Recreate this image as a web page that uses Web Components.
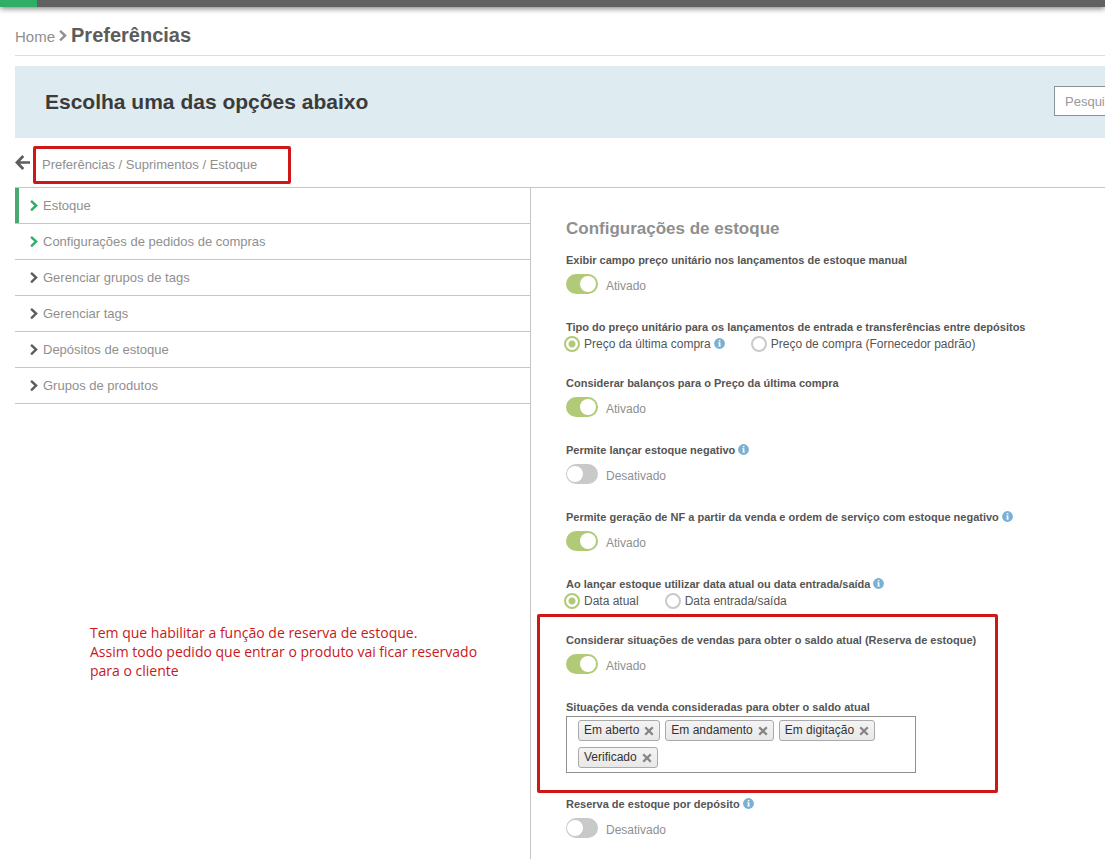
<!DOCTYPE html>
<html lang="pt-BR">
<head>
<meta charset="utf-8">
<title>Preferências</title>
<style>
  body { margin: 0; background: #fff; font-family: "Liberation Sans", Arial, sans-serif; color: #8f8f8f; overflow: hidden; }
</style>
</head>
<body>
<pref-page>
  <top-bar slot="top"></top-bar>
  <page-title parent="Home">Preferências</page-title>
  <search-banner placeholder="Pesquisar">Escolha uma das opções abaixo</search-banner>
  <crumb-bar>Preferências / Suprimentos / Estoque</crumb-bar>
  <split-view>
    <nav slot="side" aria-label="Suprimentos">
      <menu-item tone="green" current>Estoque</menu-item>
      <menu-item tone="green">Configurações de pedidos de compras</menu-item>
      <menu-item>Gerenciar grupos de tags</menu-item>
      <menu-item>Gerenciar tags</menu-item>
      <menu-item>Depósitos de estoque</menu-item>
      <menu-item>Grupos de produtos</menu-item>
    </nav>
    <side-note slot="side">Tem que habilitar a função de reserva de estoque.<br>Assim todo pedido que entrar o produto vai ficar reservado<br>para o cliente</side-note>
    <section-title>Configurações de estoque</section-title>
    <switch-field on>Exibir campo preço unitário nos lançamentos de estoque manual</switch-field>
    <radio-field>Tipo do preço unitário para os lançamentos de entrada e transferências entre depósitos
      <radio-option slot="options" checked info>Preço da última compra</radio-option>
      <radio-option slot="options">Preço de compra (Fornecedor padrão)</radio-option>
    </radio-field>
    <switch-field on>Considerar balanços para o Preço da última compra</switch-field>
    <switch-field info>Permite lançar estoque negativo</switch-field>
    <switch-field on info>Permite geração de NF a partir da venda e ordem de serviço com estoque negativo</switch-field>
    <radio-field info>Ao lançar estoque utilizar data atual ou data entrada/saída
      <radio-option slot="options" checked>Data atual</radio-option>
      <radio-option slot="options">Data entrada/saída</radio-option>
    </radio-field>
    <highlight-box>
      <switch-field on>Considerar situações de vendas para obter o saldo atual (Reserva de estoque)</switch-field>
      <tag-field>Situações da venda consideradas para obter o saldo atual
        <tag-chip slot="tags">Em aberto</tag-chip>
        <tag-chip slot="tags">Em andamento</tag-chip>
        <tag-chip slot="tags">Em digitação</tag-chip>
        <tag-chip slot="tags">Verificado</tag-chip>
      </tag-field>
    </highlight-box>
    <switch-field info>Reserva de estoque por depósito</switch-field>
  </split-view>
</pref-page>
<script>
const chevron = `<svg class="chev" viewBox="0 0 8 12" width="8" height="12" aria-hidden="true"><path d="M1.1.9 6.1 5.6 1.1 10.4" fill="none" stroke="currentColor" stroke-width="2.4"/></svg>`;

function define(name, html, setup) {
  const template = document.createElement('template');
  template.innerHTML = html;
  customElements.define(name, class extends HTMLElement {
    constructor() {
      super();
      this.attachShadow({ mode: 'open' }).append(template.content.cloneNode(true));
    }
    connectedCallback() {
      if (setup) setup(this, this.shadowRoot);
    }
  });
}

define('pref-page', `<style>
  :host { display: flex; flex-direction: column; min-height: 100vh; }
  main { display: flex; flex-direction: column; flex: 1; padding-left: 15px; }
  ::slotted(split-view) { flex: 1; }
</style><slot name="top"></slot><main><slot></slot></main>`);

define('top-bar', `<style>
  :host { display: block; height: 7px; background: #616161; box-shadow: 0 1px 6px #0009; }
  div { width: 37px; height: 7px; background: #2fae68; }
</style><div></div>`);

define('page-title', `<style>
  :host { display: flex; align-items: center; gap: 4px; height: 48px; margin-bottom: 10px; border-bottom: 1px solid #ddd; }
  a { color: #8f8f8f; font-size: 15px; text-decoration: none; padding-top: 10px; }
  .chev { color: #8f8f8f; padding-top: 9px; }
  h1 { margin: 0; padding-top: 8px; color: #5c5c5c; font-size: 20px; line-height: 24px; }
</style><a href="#"></a>${chevron}<h1><slot></slot></h1>`, (host, root) => {
  root.querySelector('a').textContent = host.getAttribute('parent');
});

define('search-banner', `<style>
  :host { display: flex; align-items: center; justify-content: space-between; height: 72px; padding-left: 30px; background: #deebf1; overflow: hidden; }
  h2 { margin: 0; color: #3b3b3b; font-size: 21px; line-height: 24px; }
  input { box-sizing: border-box; flex: none; width: 200px; height: 30px; margin: 0 -149px 2px 0; padding: 0 10px; border: 1px solid #8a9296; border-radius: 0; background: #fff; font: 13px "Liberation Sans", Arial, sans-serif; }
  input::placeholder { color: #999; opacity: 1; }
</style><h2><slot></slot></h2><input type="search">`, (host, root) => {
  const input = root.querySelector('input');
  input.placeholder = host.getAttribute('placeholder');
  input.setAttribute('aria-label', input.placeholder);
});

define('crumb-bar', `<style>
  :host { display: flex; align-items: center; gap: 3px; height: 49px; border-bottom: 1px solid #c6c6c6; }
  button { display: flex; padding: 0; border: 0; background: none; color: #5c5c5c; }
  .box { box-sizing: border-box; width: 258px; height: 38px; margin-top: 5px; padding-left: 6px; border: 3px solid #cd1719; border-radius: 2px; font-size: 13px; line-height: 31px; white-space: nowrap; }
</style><button type="button" aria-label="Voltar"><svg viewBox="0 0 15 16" width="15" height="16"><path d="M8.3 1 1.9 7.5l6.4 6.5M2 7.5h13" fill="none" stroke="currentColor" stroke-width="2.7"/></svg></button><div class="box"><slot></slot></div>`);

define('split-view', `<style>
  :host { display: grid; grid-template-columns: minmax(280px, 516px) 1fr; }
  .side { border-right: 1px solid #c6c6c6; }
  .content { padding: 30px 15px 0 35px; }
</style><div class="side"><slot name="side"></slot></div><div class="content"><slot></slot></div>`);

define('menu-item', `<style>
  :host { display: block; border-bottom: 1px solid #c6c6c6; color: #5c5c5c; }
  :host([tone="green"]) { color: #2fae68; }
  a { display: flex; align-items: center; gap: 5px; height: 35px; padding-left: 11px; border-left: 4px solid transparent; color: inherit; font-size: 13px; text-decoration: none; }
  :host([current]) a { border-color: #4aa873; }
  span { color: #8f8f8f; }
</style><a href="#">${chevron}<span><slot></slot></span></a>`, (host, root) => {
  if (host.hasAttribute('current')) root.querySelector('a').setAttribute('aria-current', 'page');
});

define('side-note', `<style>
  :host { display: block; margin: 219px 0 0 75px; color: #c8191b; font: 14px/19px "Open Sans", sans-serif; white-space: nowrap; }
</style><slot></slot>`);

define('section-title', `<style>
  :host { display: block; margin-bottom: 14px; }
  h2 { margin: 0; padding-top: 1px; color: #8f8f8f; font-size: 17px; line-height: 20px; }
</style><h2><slot></slot></h2>`);

define('info-icon', `<style>
  :host { display: inline-block; width: 11px; height: 11px; margin-bottom: 1px; }
  svg { display: block; }
</style><svg viewBox="0 0 11 11" width="11" height="11" role="img" aria-label="Informação"><circle cx="5.5" cy="5.5" r="5.4" fill="#7bb0d4"/><path d="M4.8 2h1.6v1.3H4.8zM4.3 4.3h2.1v3.4h.5v.9H4.3v-.9h.5V5.2h-.5z" fill="#fff"/></svg>`);

const fieldStyle = `
  .title { display: flex; align-items: center; gap: 3px; color: #555; font-size: 11px; font-weight: bold; line-height: 14px; white-space: nowrap; }
  info-icon { display: none; }
  :host([info]) info-icon { display: inline-block; }`;

define('switch-field', `<style>${fieldStyle}
  :host { display: block; margin-bottom: 26px; }
  .row { display: flex; gap: 8px; margin-top: 7px; height: 20px; }
  input { appearance: none; width: 32px; height: 20px; margin: 0; padding: 2px 1px; box-sizing: border-box; border-radius: 10px; background: #c9c9c9; }
  input::before { content: ""; display: block; width: 16px; height: 16px; border-radius: 8px; background: #fff; }
  input:checked { background: #b1ca78; padding-left: 14px; }
  .state { font-size: 12px; line-height: 24px; }
</style>
<div class="title"><label for="switch"><slot></slot></label><info-icon></info-icon></div>
<div class="row"><input type="checkbox" role="switch" id="switch"><label class="state" for="switch"></label></div>`, (host, root) => {
  const input = root.querySelector('input');
  const state = root.querySelector('.state');
  const show = () => { state.textContent = input.checked ? 'Ativado' : 'Desativado'; };
  input.checked = host.hasAttribute('on');
  input.onchange = show;
  show();
});

define('radio-field', `<style>${fieldStyle}
  :host { display: block; margin-bottom: 24px; }
  .options { display: flex; gap: 26px; margin: 2px 0 0 -2px; }
</style>
<div class="title"><span id="title"><slot></slot></span><info-icon></info-icon></div>
<div class="options" role="radiogroup" aria-labelledby="title"><slot name="options"></slot></div>`, (host) => {
  host.addEventListener('pick', (event) => {
    host.querySelectorAll('radio-option').forEach((option) => {
      option.shadowRoot.querySelector('input').checked = option === event.target;
    });
  });
});

define('radio-option', `<style>
  :host { display: flex; align-items: center; gap: 3px; height: 16px; color: #555; font-size: 12px; line-height: 16px; white-space: nowrap; }
  label { display: flex; align-items: center; gap: 4px; }
  input { appearance: none; box-sizing: border-box; width: 16px; height: 16px; margin: 0; border: 2px solid #c9c9c9; border-radius: 8px; background: #fff; }
  input:checked { border-color: #b1ca78; background: radial-gradient(circle, #b1ca78 3px, #fff 4px); }
  info-icon { display: none; }
  :host([info]) info-icon { display: inline-block; }
</style><label><input type="radio"><span><slot></slot></span></label><info-icon></info-icon>`, (host, root) => {
  const input = root.querySelector('input');
  input.checked = host.hasAttribute('checked');
  input.onchange = () => host.dispatchEvent(new CustomEvent('pick', { bubbles: true }));
});

define('highlight-box', `<style>
  :host { display: block; box-sizing: border-box; max-width: 461px; margin: -19px 0 4px -29px; padding: 16px 26px 17px; border: 3px solid #cd1719; border-radius: 2px; }
</style><slot></slot>`);

define('tag-field', `<style>${fieldStyle}
  :host { display: block; }
  .box { display: flex; flex-wrap: wrap; gap: 6px 5px; box-sizing: border-box; max-width: 350px; margin-top: 2px; padding: 3px 11px 4px; border: 1px solid #8f8f8f; }
</style>
<div class="title"><span id="title"><slot></slot></span></div>
<div class="box" role="group" aria-labelledby="title"><slot name="tags"></slot></div>`);

define('tag-chip', `<style>
  :host { display: flex; align-items: center; gap: 5px; box-sizing: border-box; height: 21px; padding: 0 5px; border: 1px solid #aaa; border-radius: 3px; background: linear-gradient(#f4f4f4, #e8e8e8); color: #333; font-size: 12px; line-height: 19px; }
  button { display: flex; padding: 0; border: 0; background: none; color: #858585; }
</style><span><slot></slot></span><button type="button" aria-label="Remover"><svg viewBox="0 0 10 10" width="10" height="10"><path d="M1.2 1.2 8.8 8.8M8.8 1.2 1.2 8.8" stroke="currentColor" stroke-width="2.3"/></svg></button>`, (host, root) => {
  root.querySelector('button').onclick = () => host.remove();
});
</script>
</body>
</html>
